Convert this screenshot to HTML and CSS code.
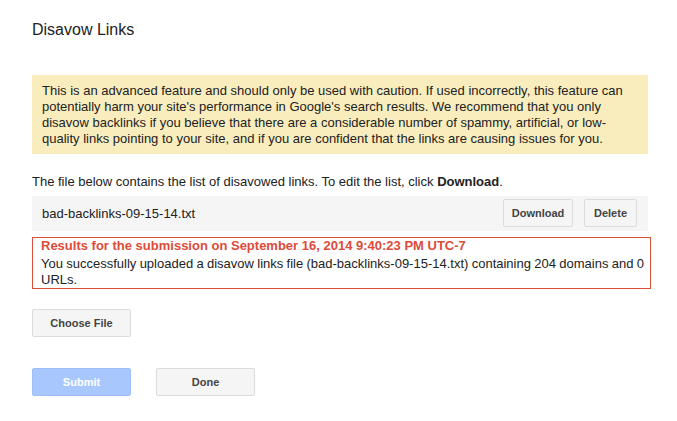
FILE: index.html
```html
<!DOCTYPE html>
<html>
<head>
<meta charset="utf-8">
<link rel="stylesheet" href="styles.css">
</head>
<body>
<div class="page">
  <h1 class="title">Disavow Links</h1>
  <div class="warning">This is an advanced feature and should only be used with caution. If used incorrectly, this feature can potentially harm your site's performance in Google's search results. We recommend that you only disavow backlinks if you believe that there are a considerable number of spammy, artificial, or low-quality links pointing to your site, and if you are confident that the links are causing issues for you.</div>
  <p class="intro">The file below contains the list of disavowed links. To edit the list, click <b>Download</b>.</p>
  <div class="file-row">
    <span class="file-name">bad-backlinks-09-15-14.txt</span>
    <div class="file-actions">
      <button class="btn btn-download">Download</button>
      <button class="btn btn-delete">Delete</button>
    </div>
  </div>
  <div class="result">
    <div class="result-title">Results for the submission on September 16, 2014 9:40:23 PM UTC-7</div>
    <div class="result-body">You successfully uploaded a disavow links file (bad-backlinks-09-15-14.txt) containing 204 domains and 0 URLs.</div>
  </div>
  <div class="choose-row">
    <button class="btn btn-wide">Choose File</button>
  </div>
  <div class="submit-row">
    <button class="btn btn-wide btn-primary">Submit</button>
    <button class="btn btn-wide">Done</button>
  </div>
</div>
</body>
</html>
```
FILE: styles.css
```css
html, body {
  margin: 0;
  padding: 0;
  background: #fff;
}
body {
  font-family: "Liberation Sans", Arial, sans-serif;
  font-size: 13px;
  color: #222;
}
.page {
  padding: 20px 0 0 32px;
  width: 619px;
}
.title {
  margin: 0;
  font-size: 16px;
  font-weight: normal;
  line-height: 20px;
  color: #222;
}
.warning {
  margin-top: 35px;
  width: 596px;
  padding: 8px 10px 7px 10px;
  background: #f9edbe;
  line-height: 16px;
  color: #222;
}
.intro {
  margin: 20px 0 0 0;
  line-height: 16px;
}
.intro b {
  color: #222;
}
.file-row {
  margin-top: 6px;
  width: 616px;
  height: 35px;
  background: #f5f5f5;
  display: flex;
  align-items: center;
  justify-content: space-between;
  box-sizing: border-box;
  padding: 0 11px 0 10px;
}
.file-name {
  line-height: 16px;
}
.file-actions {
  display: flex;
  gap: 11px;
  margin-top: -1px;
}
.btn {
  font-family: "Liberation Sans", Arial, sans-serif;
  font-size: 11px;
  font-weight: bold;
  color: #444;
  background: #f5f5f5;
  border: 1px solid #dcdcdc;
  border-radius: 2px;
  height: 28px;
  padding: 0;
  margin: 0;
  box-sizing: border-box;
}
.btn-download {
  width: 70px;
}
.btn-delete {
  width: 53px;
}
.btn-wide {
  width: 99px;
}
.btn-primary {
  background: #a8c8fd;
  border-color: #9cbffa;
  color: #fff;
}
.result {
  margin-top: 6px;
  width: 619px;
  box-sizing: border-box;
  border: 1px solid #dd4b39;
  padding: 0 0 0 8px;
}
.result-title {
  color: #dd4b39;
  font-weight: bold;
  line-height: 16px;
  margin-bottom: 2px;
}
.result-body {
  line-height: 16px;
  word-spacing: -0.3px;
}
.choose-row {
  margin-top: 20px;
}
.submit-row {
  margin-top: 31px;
  display: flex;
  gap: 25px;
}
```
